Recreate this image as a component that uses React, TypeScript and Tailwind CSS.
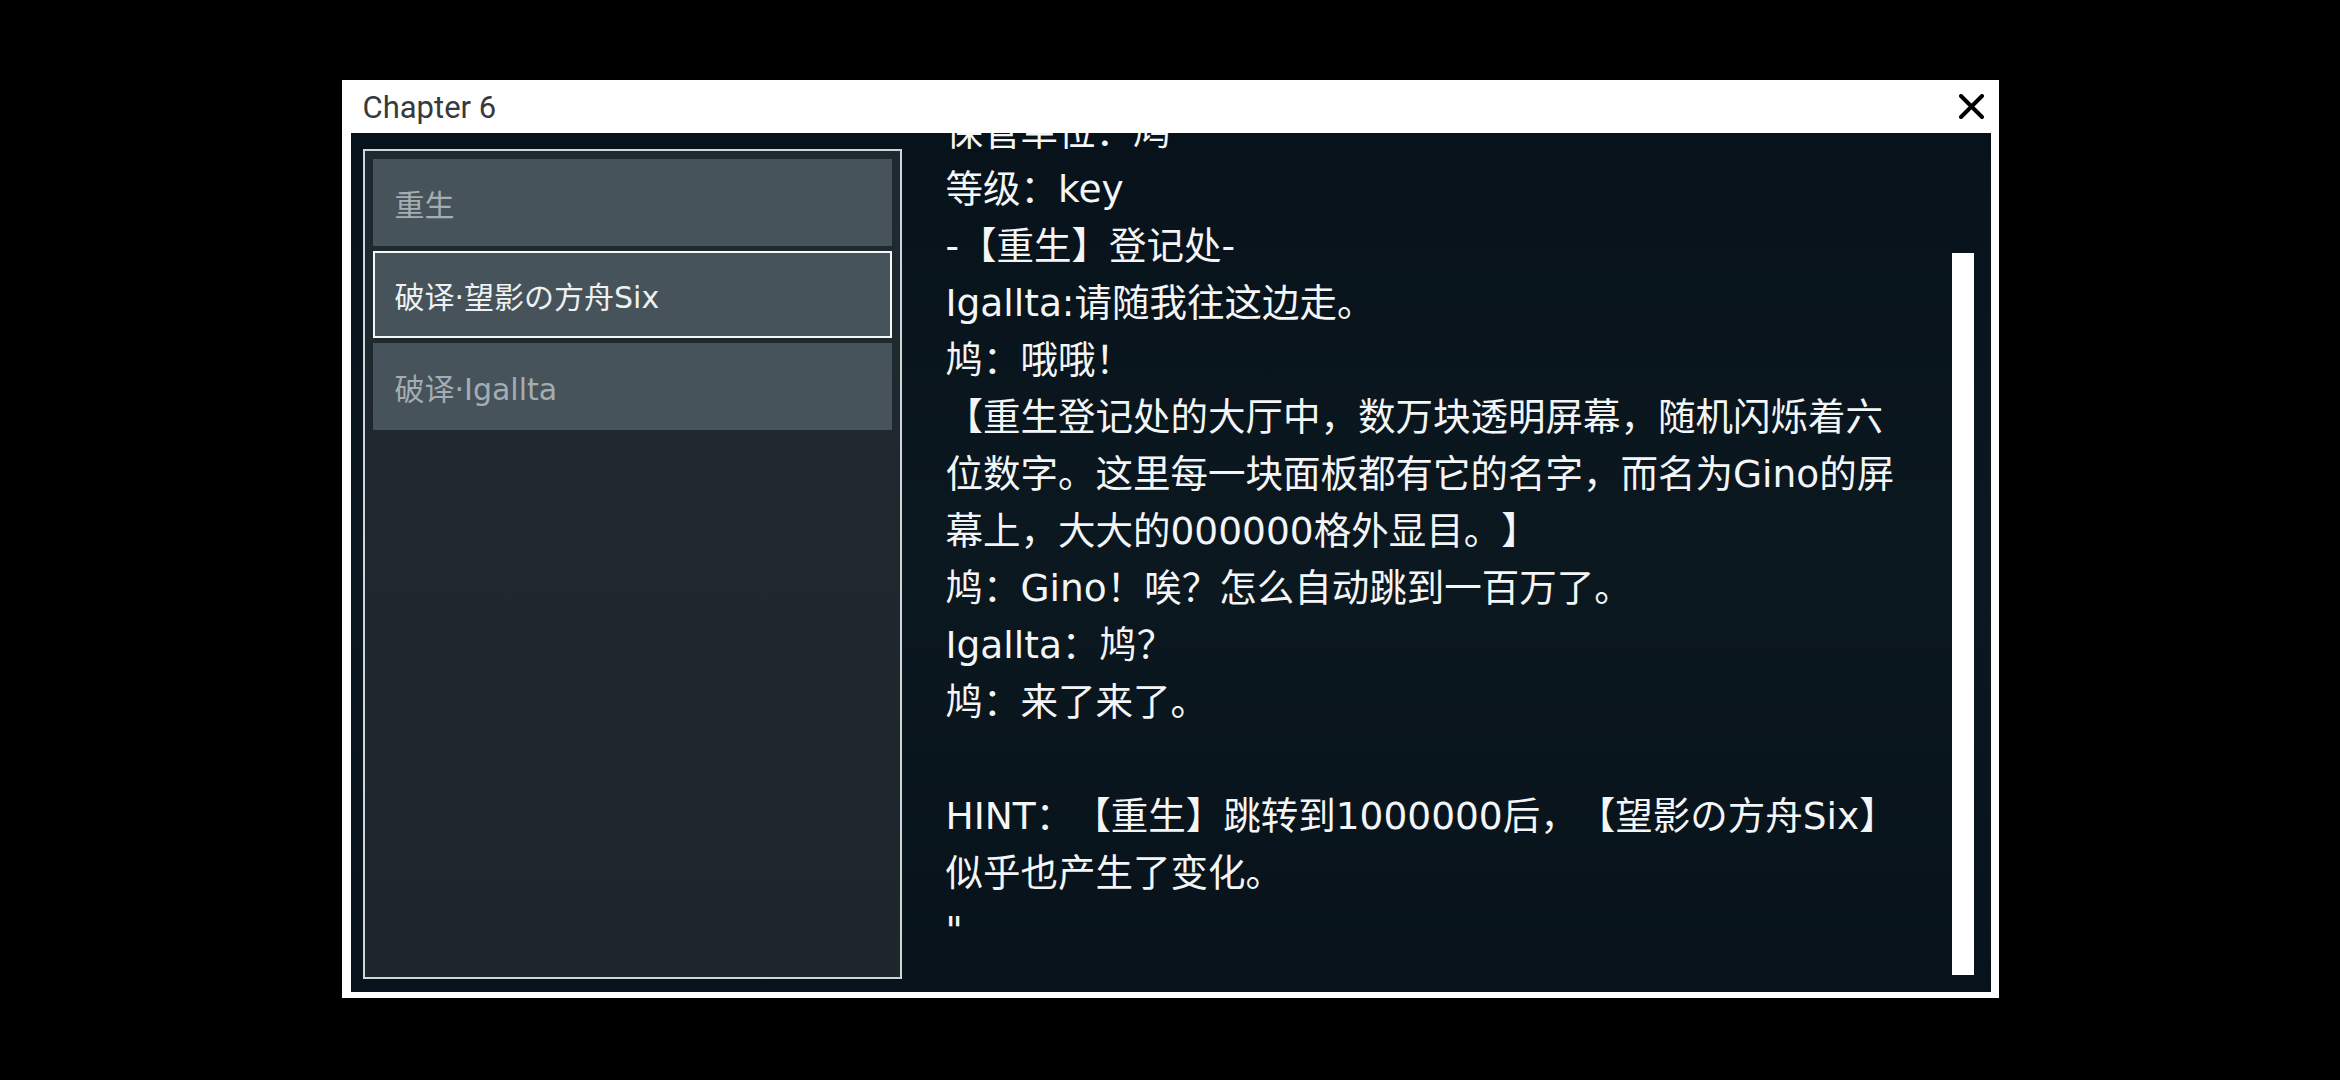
const lines = [
  "保管单位：鸠",
  "等级：key",
  "-【重生】登记处-",
  "Igallta:请随我往这边走。",
  "鸠：哦哦！",
  "【重生登记处的大厅中，数万块透明屏幕，随机闪烁着六",
  "位数字。这里每一块面板都有它的名字，而名为Gino的屏",
  "幕上，大大的000000格外显目。】",
  "鸠：Gino！唉？怎么自动跳到一百万了。",
  "Igallta：鸠？",
  "鸠：来了来了。",
  " ",
  "HINT：【重生】跳转到1000000后，【望影の方舟Six】",
  "似乎也产生了变化。",
  "\"",
];

const chapters = [
  { title: "重生", active: false },
  { title: "破译·望影の方舟Six", active: true },
  { title: "破译·Igallta", active: false },
];

const ChapterItem = ({ title, active }: { title: string; active: boolean }) => {
  return (
    <div
      className={
        active
          ? "h-[87px] flex items-center pl-[20px] bg-[#46535a] border-2 border-[#f4f6f7] text-[#eef1f2]"
          : "h-[87px] flex items-center pl-[22px] bg-[#46535a] text-[#a4adb1]"
      }
    >
      <span className="mt-[6px] text-[30px] font-['DejaVu_Sans','Noto_Sans_CJK_SC',sans-serif] [text-spacing-trim:space-all]">
        {title}
      </span>
    </div>
  );
};

export default function App() {
  return (
    <div className="w-screen h-screen bg-black flex items-center justify-center">
      <div className="w-[1657px] h-[918px] bg-white flex flex-col pl-[9px] pr-[8px] pb-[6px] mt-[-2px]">
        <div className="h-[53px] flex items-center justify-between shrink-0">
          <div className="pl-[12px] mt-[3px] text-[31px] text-[#363a3c] font-['Roboto',sans-serif]">
            Chapter 6
          </div>
          <button className="mr-[7px] w-[25px] h-[25px] flex items-center justify-center">
            <svg width="25" height="25" viewBox="0 0 25 25">
              <path d="M2 2 L23 23 M23 2 L2 23" stroke="#000" strokeWidth="4" strokeLinecap="round" />
            </svg>
          </button>
        </div>

        <div className="flex-1 flex bg-linear-to-b from-[#07121a] via-[#0c1820] to-[#07121a] overflow-hidden">
          <div className="pl-[12px] pt-[16px] pb-[13px] shrink-0">
            <div className="w-[539px] h-full border-2 border-[#cfd6d9] bg-linear-to-b from-[#1f2a30] to-[#1d262b] p-[8px] flex flex-col gap-[5px]">
              {chapters.map((c) => (
                <ChapterItem key={c.title} title={c.title} active={c.active} />
              ))}
            </div>
          </div>

          <div className="flex-1 ml-[44px] overflow-hidden">
            <div className="-mt-[29px] text-[37.5px] leading-[57px] text-[#f3f5f6] font-['DejaVu_Sans','Noto_Sans_CJK_SC',sans-serif] whitespace-pre [text-spacing-trim:space-all]">
              {lines.map((l, i) => (
                <div key={i}>{l}</div>
              ))}
            </div>
          </div>

          <div className="pt-[120px] pb-[17px] pr-[17px] pl-[10px] shrink-0">
            <div className="w-[22px] h-full bg-white" />
          </div>
        </div>
      </div>
    </div>
  );
}
